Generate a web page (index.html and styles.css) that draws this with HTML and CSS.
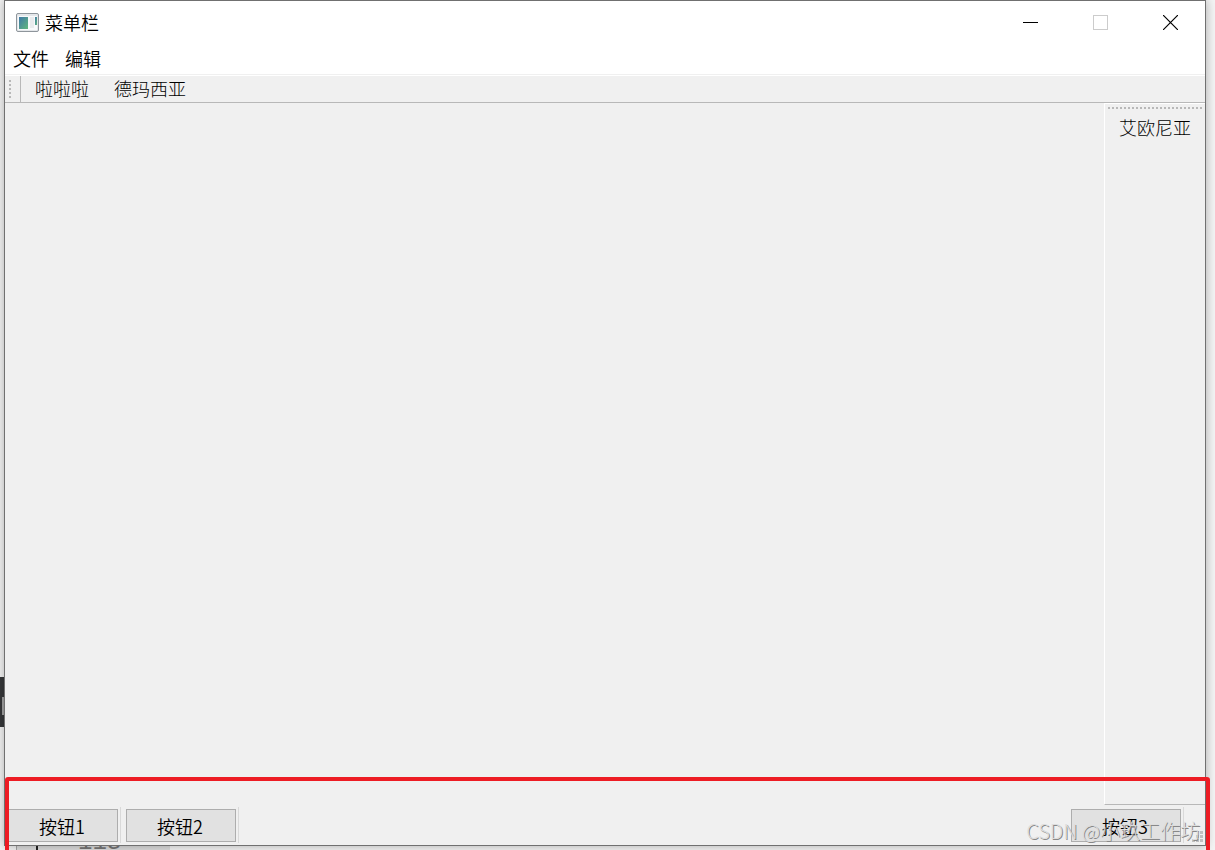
FILE: index.html
```html
<!DOCTYPE html>
<html lang="zh-CN">
<head>
  <meta charset="UTF-8" />
  <meta name="viewport" content="width=device-width, initial-scale=1" />
  <title>菜单栏</title>
  <link rel="stylesheet" href="styles.css">
</head>
<body>

  <!-- editor behind the window -->
  <div class="side-tab"></div>
  <div class="editor-line"><span class="line-number">113</span></div>

  <main class="window">
    <header class="title-bar">
      <svg class="app-icon" width="24" height="20" viewBox="0 0 24 20">
        <defs>
          <linearGradient id="screen" x1="0" y1="0" x2="1" y2="1">
            <stop offset="0" stop-color="#4078a8" />
            <stop offset="1" stop-color="#62b87c" />
          </linearGradient>
        </defs>
        <rect x="0.5" y="0.5" width="22" height="18" rx="1.5" fill="#e4e7ea" stroke="#8e959b" />
        <rect x="2" y="3" width="19" height="14" fill="#f8f9fa" />
        <rect x="3" y="4" width="9" height="12" fill="url(#screen)" />
        <rect x="14" y="4" width="4" height="11" fill="#e9ebed" />
        <rect x="19" y="4" width="2" height="8" fill="url(#screen)" />
      </svg>
      <h1>菜单栏</h1>
      <div class="window-controls">
        <button aria-label="最小化">
          <svg width="15" height="15" viewBox="0 0 15 15"><path d="M0 7.5H15" stroke="#000" /></svg>
        </button>
        <button aria-label="最大化" disabled>
          <svg width="15" height="15" viewBox="0 0 15 15"><rect x="0.5" y="0.5" width="14" height="14" fill="none" stroke="#ccc" /></svg>
        </button>
        <button aria-label="关闭">
          <svg width="15" height="15" viewBox="0 0 15 15"><path d="M0 0L15 15M15 0L0 15" stroke="#000" stroke-width="1.2" /></svg>
        </button>
      </div>
    </header>

    <nav class="menu-bar">
      <button>文件</button>
      <button>编辑</button>
    </nav>

    <div class="tool-bar">
      <span class="handle"></span>
      <button>啦啦啦</button>
      <button>德玛西亚</button>
    </div>

    <div class="workspace">
      <div class="central"></div>
      <aside class="side-bar">
        <span class="handle"></span>
        <button>艾欧尼亚</button>
      </aside>
    </div>

    <footer class="status-bar">
      <div class="status-item"><button>按钮1</button></div>
      <div class="status-item"><button>按钮2</button></div>
      <div class="status-item permanent"><button>按钮3</button></div>
      <svg class="size-grip" width="12" height="12" viewBox="0 0 12 12" fill="#bfbfbf">
        <path d="M8 0h3v3h-3zM4 4h3v3h-3zM8 4h3v3h-3zM0 8h3v3h-3zM4 8h3v3h-3zM8 8h3v3h-3z" />
      </svg>
    </footer>
  </main>

  <div class="highlight"></div>
  <div class="watermark">CSDN @小玖工作坊</div>

</body>
</html>
```

FILE: styles.css
```css
* {
  box-sizing: border-box;
}
body {
  position: relative;
  margin: 0;
  height: 100vh;
  overflow: hidden;
  padding: 0 9px 4px 4px;
  background-color: #f4f4f4;
  font-family: "Noto Sans CJK SC", sans-serif;
  font-size: 18px;
  font-weight: 350;
  color: #000;
}
button {
  margin: 0;
  padding: 0;
  border: none;
  background: none;
  font: inherit;
  color: inherit;
}

/* editor behind the window */
.side-tab {
  position: absolute;
  left: 0;
  bottom: 123px;
  width: 4px;
  height: 50px;
  background-color: #37383a;
}
.side-tab::after {
  content: "";
  position: absolute;
  top: 20px;
  right: 0;
  width: 2px;
  height: 18px;
  background-color: #a5a5a5;
}
.editor-line {
  position: absolute;
  left: 16px;
  bottom: 0;
  width: 154px;
  height: 24px;
  border-left: 1px solid #a5a5a5;
  background-color: #dcdcdc;
}
.editor-line::before {
  content: "";
  position: absolute;
  left: 19px;
  width: 2px;
  height: 24px;
  background-color: #222;
}
.line-number {
  position: absolute;
  left: 61px;
  bottom: -5px;
  font: 24px/24px "Liberation Mono", monospace;
  color: #777;
}

.window {
  position: relative;
  display: flex;
  flex-direction: column;
  height: 100%;
  border: 1px solid #707070;
  background-color: #f0f0f0;
  box-shadow: 0 0 10px rgba(0, 0, 0, 0.3);
}

.title-bar {
  display: flex;
  align-items: center;
  height: 43px;
  padding-left: 11px;
  background-color: #fff;
}
.title-bar h1 {
  margin: 0 0 0 5px;
  padding-bottom: 2px;
  font-size: 18px;
  font-weight: 350;
}
.window-controls {
  display: flex;
  margin-left: auto;
}
.window-controls button {
  display: flex;
  align-items: center;
  justify-content: center;
  width: 70px;
  height: 43px;
}

.menu-bar {
  display: flex;
  align-items: flex-start;
  gap: 16px;
  height: 31px;
  padding: 1px 0 0 8px;
  border-bottom: 1px solid #f0f0f0;
  background-color: #fff;
}

.tool-bar {
  display: flex;
  align-items: center;
  height: 28px;
  border-top: 1px solid #fff;
  border-bottom: 1px solid #b8b8b8;
  font-weight: 300;
}
.tool-bar button {
  margin-right: 25px;
  padding-bottom: 2px;
}
.tool-bar .handle {
  display: flex;
  align-items: center;
  width: 16px;
  height: 26px;
  margin-right: 14px;
  padding-left: 4px;
  border-right: 1px solid #b8b8b8;
}
.tool-bar .handle::before {
  content: "";
  width: 2px;
  height: 18px;
  background: repeating-linear-gradient(#b8b8b8 0 2px, transparent 2px 4px);
}

.workspace {
  display: flex;
  flex: 1;
}
.central {
  flex: 1;
}
.side-bar {
  width: 101px;
  border-top: 1px solid #fff;
  border-left: 1px solid #fff;
  border-bottom: 1px solid #b8b8b8;
  text-align: center;
  font-weight: 300;
}
.side-bar .handle {
  display: block;
  height: 2px;
  margin: 3px 3px 5px;
  background: repeating-linear-gradient(90deg, #b8b8b8 0 2px, transparent 2px 4px);
}

.status-bar {
  display: flex;
  align-items: center;
  height: 40px;
  padding-left: 3px;
}
.status-item {
  display: flex;
  align-items: center;
  height: 36px;
  margin-right: 5px;
  padding-right: 2px;
  border-right: 1px solid #d9d9d9;
}
.status-item button {
  width: 110px;
  height: 33px;
  margin-top: 1px;
  padding-right: 2px;
  border: 1px solid #adadad;
  background-color: #e1e1e1;
}
.permanent {
  margin-left: auto;
}
.size-grip {
  align-self: flex-end;
  margin: 0 1px 2px 3px;
}

.highlight {
  position: absolute;
  left: 5px;
  right: 5px;
  bottom: -8px;
  height: 81px;
  border: 4px solid #ed1c24;
  border-radius: 3px;
}
.watermark {
  position: absolute;
  right: 15px;
  bottom: 4px;
  font-size: 20px;
  line-height: 30px;
  font-weight: 300;
  color: #ddd;
  text-shadow: 1px 1px 0 #888;
}
```
